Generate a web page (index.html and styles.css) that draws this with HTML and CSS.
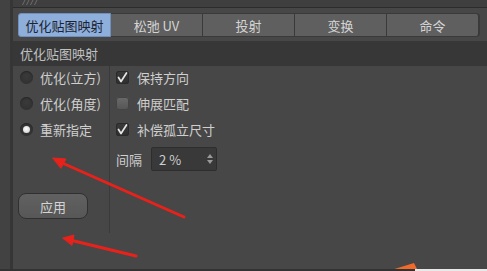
FILE: index.html
```html
<!DOCTYPE html>
<html lang="zh">
<head>
<meta charset="utf-8">
<link rel="stylesheet" href="styles.css">
</head>
<body>
<div class="app">
  <div class="side"></div>
  <div class="main">
    <div class="topbar"><svg class="grip" width="16" height="6" viewBox="0 0 16 6"><g stroke="#6c6c6c" stroke-width="1"><line x1="0.5" y1="5" x2="3" y2="0"/><line x1="4.5" y1="5" x2="7" y2="0"/><line x1="8.5" y1="5" x2="11" y2="0"/><line x1="12.5" y1="5" x2="15" y2="0"/></g></svg></div>
    <div class="tabs">
      <div class="tab active">优化贴图映射</div>
      <div class="tab">松弛 UV</div>
      <div class="tab">投射</div>
      <div class="tab">变换</div>
      <div class="tab last">命令</div>
    </div>
    <div class="header">优化贴图映射</div>
    <div class="body">
      <div class="col-left">
        <div class="row"><span class="radio"></span><span class="lbl">优化(立方)</span></div>
        <div class="row"><span class="radio"></span><span class="lbl">优化(角度)</span></div>
        <div class="row"><span class="radio on"></span><span class="lbl">重新指定</span></div>
        <div class="spacer"></div>
        <div class="btn">应用</div>
      </div>
      <div class="col-right">
        <div class="row"><span class="check"><svg viewBox="0 0 13 13" width="13" height="13"><path d="M2.5 6.5 L5 10.5 L10.5 2" fill="none" stroke="#e6e6e6" stroke-width="1.7" stroke-linecap="round" stroke-linejoin="round"/></svg></span><span class="lbl">保持方向</span></div>
        <div class="row"><span class="check"></span><span class="lbl">伸展匹配</span></div>
        <div class="row"><span class="check"><svg viewBox="0 0 13 13" width="13" height="13"><path d="M2.5 6.5 L5 10.5 L10.5 2" fill="none" stroke="#e6e6e6" stroke-width="1.7" stroke-linecap="round" stroke-linejoin="round"/></svg></span><span class="lbl">补偿孤立尺寸</span></div>
        <div class="row field">
          <span class="lbl">间隔</span>
          <div class="input"><span>2 %</span><span class="spin"><svg viewBox="0 0 6 10" width="6" height="10"><path d="M3 0 L6 4 L0 4 Z M0 6 L6 6 L3 10 Z" fill="#9a9a9a"/></svg></span></div>
        </div>
      </div>
    </div>
  </div>
</div>
<svg class="arrows" width="487" height="271" viewBox="0 0 487 271">
  <g stroke="#e8221b" stroke-width="3" fill="#e8221b" stroke-linecap="round">
    <line x1="184" y1="217" x2="60" y2="162"/>
    <path d="M53 158 L66 159 L61 168 Z" stroke-width="1"/>
    <line x1="136" y1="256" x2="70" y2="240"/>
    <path d="M63 238 L74 235 L72 245 Z" stroke-width="1"/>
  </g>
  <path d="M388 271 L414 263 L418 271 Z" fill="#f26a2a"/>
</svg>
<div class="bottom"><div class="bl"></div><div class="br"></div></div>
</body>
</html>
```
FILE: styles.css
```css
html, body {
  margin: 0;
  padding: 0;
}
body {
  width: 487px;
  height: 271px;
  overflow: hidden;
  background: #474747;
  font-family: "Microsoft YaHei", "Noto Sans CJK SC", sans-serif;
  font-size: 13px;
  color: #cfcfcf;
  position: relative;
}
.app {
  display: flex;
  height: 271px;
}
.side {
  width: 10px;
  flex: none;
  background: #424242;
  border-right: 3px solid #363636;
}
.main {
  flex: 1;
  display: flex;
  flex-direction: column;
}
.topbar {
  height: 7px;
  background: #3f3f3f;
  border-bottom: 1px solid #2c2c2c;
  position: relative;
}
.grip {
  position: absolute;
  left: 9px;
  top: 0;
}
.tabs {
  display: flex;
  margin: 5px 7px 0 5px;
  height: 24px;
}
.tab {
  flex: 1;
  display: flex;
  align-items: center;
  justify-content: center;
  background: #5f5f5f;
  border: 1px solid #3a3a3a;
  border-left: none;
  color: #d4d4d4;
  font-size: 13px;
}
.tab.active {
  background: #8eaedb;
  border: 1px solid #6f8fbd;
  color: #1c2430;
  border-radius: 3px 0 0 3px;
}
.tab.last {
  border-right: 2px solid #3a3a3a;
  border-radius: 0 4px 4px 0;
}
.header {
  margin-top: 4px;
  height: 25px;
  background: #373737;
  display: flex;
  align-items: center;
  padding-left: 7px;
  color: #c0c0c0;
}
.body {
  display: flex;
  flex: 1;
}
.col-left {
  width: 97px;
  flex: none;
  display: flex;
  flex-direction: column;
  gap: 4px;
  padding-left: 7px;
  box-sizing: border-box;
  border-right: 1px solid #3a3a3a;
  height: 167px;
}
.col-right {
  display: flex;
  flex-direction: column;
  gap: 4px;
  padding-left: 6px;
}
.row {
  height: 22px;
  display: flex;
  align-items: center;
}
.radio {
  width: 13px;
  height: 13px;
  border-radius: 50%;
  background: radial-gradient(circle at 50% 40%, #3a3a3a, #2f2f2f);
  box-shadow: inset 0 1px 1px #262626;
  margin-right: 7px;
  flex: none;
  position: relative;
}
.radio.on::after {
  content: "";
  position: absolute;
  left: 3px;
  top: 3px;
  width: 7px;
  height: 7px;
  border-radius: 50%;
  background: radial-gradient(circle at 45% 40%, #ffffff, #c8c8c8);
}
.lbl {
  color: #cfcfcf;
  white-space: nowrap;
}
.check {
  width: 13px;
  height: 13px;
  border-radius: 3px;
  background: linear-gradient(#3a3a3a, #2f2f2f);
  box-shadow: inset 0 0 0 1px #2a2a2a;
  margin-right: 8px;
  flex: none;
  display: flex;
}
.row:nth-child(2) .check {
  background: linear-gradient(#6a6a6a, #555);
  box-shadow: inset 0 0 0 1px #444;
}
.field {
  margin-top: 3px;
  height: 24px;
}
.field .lbl {
  margin-right: 9px;
}
.input {
  width: 66px;
  height: 24px;
  box-sizing: border-box;
  background: #393939;
  border: 1px solid #2e2e2e;
  border-radius: 2px;
  display: flex;
  align-items: center;
  justify-content: space-between;
  padding: 0 3px 0 7px;
  color: #cfcfcf;
}
.spin {
  display: flex;
}
.spacer {
  height: 45px;
}
.btn {
  width: 70px;
  height: 26px;
  box-sizing: border-box;
  margin-left: -2px;
  border-radius: 8px;
  background: linear-gradient(#616161, #575757);
  border: 1px solid #303030;
  display: flex;
  align-items: center;
  justify-content: center;
  color: #d4d4d4;
}
.arrows {
  position: absolute;
  left: 0;
  top: 0;
  pointer-events: none;
}
.bottom {
  position: absolute;
  left: 0;
  bottom: 0;
  width: 487px;
  height: 2px;
  display: flex;
}
.bl {
  flex: 1;
  background: #333;
}
.br {
  width: 72px;
  background: #e9e9e9;
}
```
